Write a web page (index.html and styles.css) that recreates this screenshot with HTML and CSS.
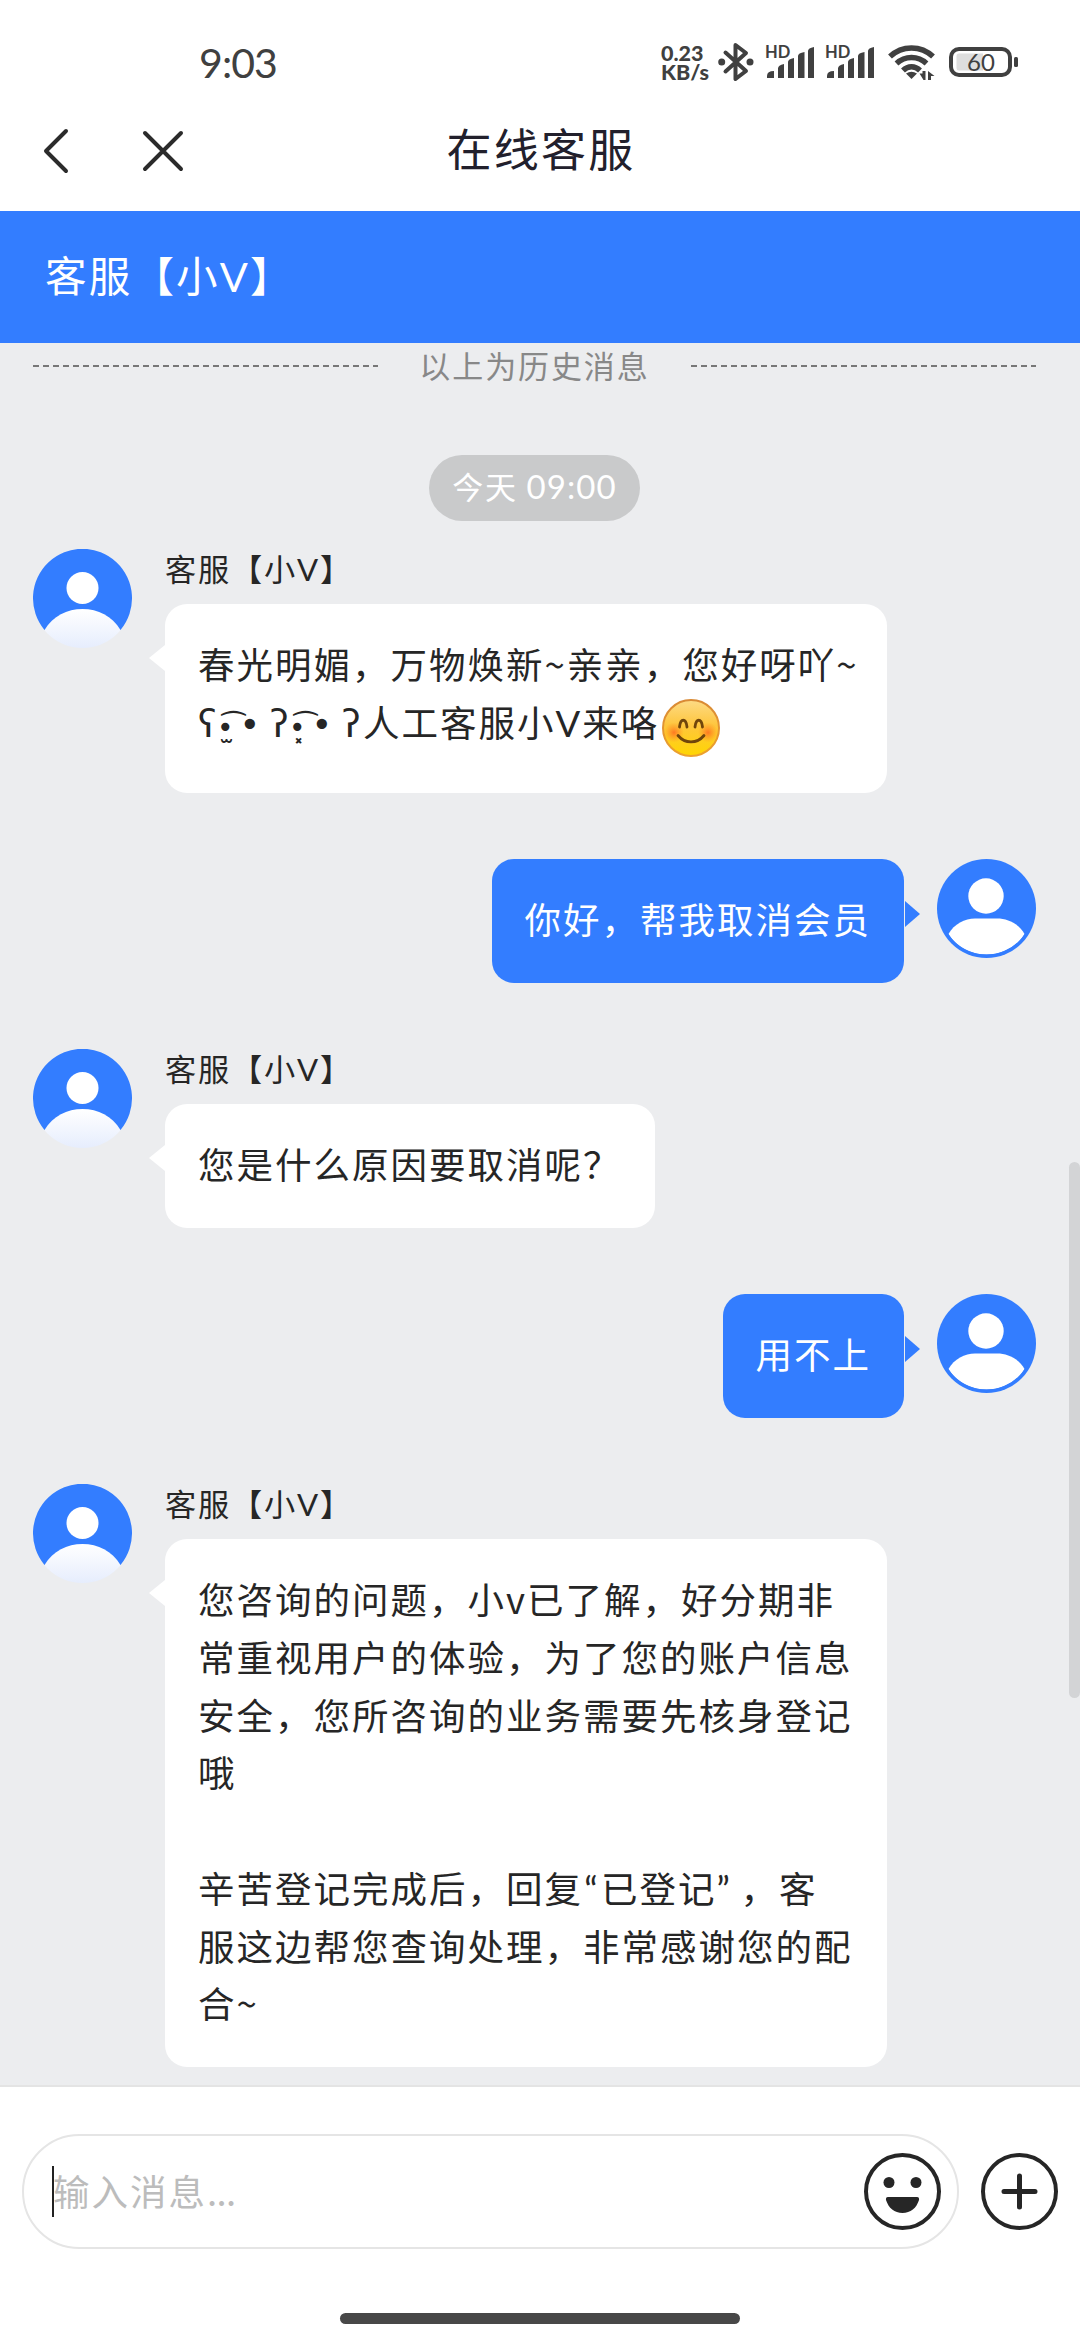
FILE: index.html
```html
<!DOCTYPE html>
<html lang="zh-CN">
<head>
<meta charset="utf-8">
<title>在线客服</title>
<link rel="stylesheet" href="styles.css">
</head>
<body>
<svg width="0" height="0" class="defs">
  <defs>
    <linearGradient id="agentBody" x1="0" y1="0" x2="0" y2="1">
      <stop offset="0" stop-color="#ffffff"/>
      <stop offset="1" stop-color="#e6edfd"/>
    </linearGradient>
    <clipPath id="round"><circle cx="49.5" cy="49.5" r="49.5"/></clipPath>
    <clipPath id="roundInner"><circle cx="49.5" cy="49.5" r="46"/></clipPath>
    <symbol id="agent" viewBox="0 0 99 99">
      <path d="M11.500 81A49.500 49.500 0 1 1 87.500 81z" fill="#337dff"/>
      <circle cx="49.5" cy="39" r="16" fill="#fff"/>
      <path clip-path="url(#round)" d="M11.500 81C20 67 34 60 49.500 60S79 67 87.500 81L92 99H7z" fill="url(#agentBody)"/>
    </symbol>
    <symbol id="user" viewBox="0 0 99 99">
      <circle cx="49.5" cy="49.5" r="49.5" fill="#337dff"/>
      <circle cx="49" cy="37" r="17.700" fill="#fff"/>
      <path clip-path="url(#roundInner)" d="M11.500 75C17 65 28 59.500 38 59.500H60C71 59.500 82 65 87.500 75C80 88 65 95.500 49.500 95.500S19 88 11.500 75z" fill="#fff"/>
    </symbol>
    <symbol id="signal" viewBox="0 0 52 36">
      <text x="0" y="14.500" class="hd">HD</text>
      <g fill="#404040"><path d="M2 35V33Q2 28 9 28V35zM13 35V25.500Q13 22 19 21V35zM23 35V19Q23 16 29 15V35zM33 35V13Q33 10 39.500 9V35zM43 35V8Q43 5 49 4V35z"/></g>
    </symbol>
  </defs>
</svg>

<header class="status">
  <span class="clock">9:03</span>
  <div class="status-icons">
    <div class="speed"><span>0.23</span><span>KB/s</span></div>
    <svg class="bt" viewBox="0 0 36 40"><path d="M7.500 10.500L28 29L17.500 37V3L28 11L7.500 29.500" fill="none" stroke="#404040" stroke-width="4" stroke-linejoin="round" stroke-linecap="round"/><circle cx="3.700" cy="20" r="3.500" fill="#404040"/><circle cx="32" cy="20" r="3.500" fill="#404040"/></svg>
    <svg class="sig"><use href="#signal"/></svg>
    <svg class="sig second"><use href="#signal"/></svg>
    <svg class="wifi" viewBox="0 0 48 36"><g fill="none" stroke="#404040" stroke-width="5.500"><path d="M2 12.500C14 1 33 1 45 12.500"/><path d="M8.500 19.500C17 11.500 30 11.500 38.500 19.500"/><path d="M15 26.500C20 21.500 27 21.500 32 26.500"/></g><path d="M18 29.500Q23.500 26 29 29.500L23.500 35z" fill="#404040"/><path d="M31.500 29.500H34.500V27H37.500V36H35.500zM40 36V27L46.500 32H43V36z" fill="#404040"/></svg>
    <svg class="battery" viewBox="0 0 70 30"><rect x="2" y="2" width="59" height="26" rx="8" fill="none" stroke="#404040" stroke-width="4"/><path d="M10 6.500H34V23.500H10Q7.500 23.500 7.500 21V9Q7.500 6.500 10 6.500" fill="#dedede"/><rect x="65" y="10" width="4" height="10" rx="1.500" fill="#404040"/><text x="32" y="23.500" text-anchor="middle" class="level">60</text></svg>
  </div>
</header>

<nav class="nav">
  <div class="nav-buttons">
    <svg class="back" viewBox="0 0 28 48"><path d="M24 4L4 24L24 44" fill="none" stroke="#2b2b2b" stroke-width="4" stroke-linecap="round" stroke-linejoin="round"/></svg>
    <svg class="close" viewBox="0 0 44 44"><path d="M4 4L40 40M40 4L4 40" fill="none" stroke="#2b2b2b" stroke-width="4" stroke-linecap="round"/></svg>
  </div>
  <h1 class="nav-title">在线客服</h1>
</nav>

<div class="agent-bar">客服【小<span class="latin">V</span>】</div>

<main class="chat">
  <div class="history"><svg class="dash"><line x1="0" y1="1" x2="345" y2="1"/></svg><span>以上为历史消息</span><svg class="dash"><line x1="0" y1="1" x2="345" y2="1"/></svg></div>
  <time class="time-pill">今天 <span class="digits">09:00</span></time>

  <section class="row">
    <svg class="avatar"><use href="#agent"/></svg>
    <div class="stack">
      <div class="name">客服【小<span class="latin">V</span>】</div>
      <div class="bubble wide with-emoji">春光明媚，万物焕新~亲亲，您好呀吖~<br><span class="kaomoji"><span>ʕ</span><span class="eyes"><span class="small-eye">•̫͡</span><span class="big-eye">•</span></span><span>ʔ</span><span class="eyes"><span class="small-eye">•͓͡</span><span class="big-eye">•</span></span><span>ʔ</span></span>人工客服小<span class="latin">V</span>来咯<svg class="emoji" viewBox="0 0 58 58">
        <defs>
          <linearGradient id="face" x1="0" y1="0" x2="0" y2="1"><stop offset="0" stop-color="#fddb86"/><stop offset=".45" stop-color="#fec63e"/><stop offset="1" stop-color="#ffd500"/></linearGradient>
          <linearGradient id="rim" x1="0" y1="0" x2="0" y2="1"><stop offset="0" stop-color="#d98a35"/><stop offset="1" stop-color="#eda12d"/></linearGradient>
          <radialGradient id="blush"><stop offset="0" stop-color="#ff6a20" stop-opacity=".85"/><stop offset="1" stop-color="#ff8a20" stop-opacity="0"/></radialGradient>
        </defs>
        <circle cx="29" cy="29" r="28" fill="url(#face)" stroke="url(#rim)" stroke-width="2"/>
        <circle cx="12" cy="33.500" r="10" fill="url(#blush)"/><circle cx="46" cy="33.500" r="10" fill="url(#blush)"/>
        <g fill="none" stroke="#70450b" stroke-linecap="round"><path d="M17.500 28C18.500 19 24 19 25 28M33 28C34 19 39.500 19 40.500 28" stroke-width="2.800"/><path d="M16 36.500C23 45 35 45 42 36.500" stroke-width="2.800"/></g>
      </svg></div>
    </div>
  </section>

  <section class="row own">
    <div class="bubble">你好，帮我取消会员</div>
    <svg class="avatar"><use href="#user"/></svg>
  </section>

  <section class="row">
    <svg class="avatar"><use href="#agent"/></svg>
    <div class="stack">
      <div class="name">客服【小<span class="latin">V</span>】</div>
      <div class="bubble">您是什么原因要取消呢？</div>
    </div>
  </section>

  <section class="row own">
    <div class="bubble">用不上</div>
    <svg class="avatar"><use href="#user"/></svg>
  </section>

  <section class="row">
    <svg class="avatar"><use href="#agent"/></svg>
    <div class="stack">
      <div class="name">客服【小<span class="latin">V</span>】</div>
      <div class="bubble wide">您咨询的问题，小v已了解，好分期非<br>常重视用户的体验，为了您的账户信息<br>安全，您所咨询的业务需要先核身登记<br>哦<br><br>辛苦登记完成后，回复<span class="quote">“</span>已登记<span class="quote closing">”</span>，客<br>服这边帮您查询处理，非常感谢您的配<br>合~</div>
    </div>
  </section>
  <div class="scrollbar"></div>
</main>

<footer class="composer">
  <div class="field">
    <span class="caret"></span><span class="placeholder">输入消息<span class="dots">...</span></span>
    <svg class="round-icon" viewBox="0 0 77 77"><circle cx="38.500" cy="38.500" r="36.500" fill="none" stroke="#262626" stroke-width="4"/><circle cx="25" cy="29.500" r="5.500" fill="#262626"/><circle cx="52" cy="29.500" r="5.500" fill="#262626"/><path d="M24 44H53Q55.500 44 55 47C52.500 55 46.500 60 38.500 60S24.500 55 22 47Q21.500 44 24 44z" fill="#262626"/></svg>
  </div>
  <svg class="round-icon" viewBox="0 0 77 77"><circle cx="38.500" cy="38.500" r="36.500" fill="none" stroke="#262626" stroke-width="4"/><path d="M38.500 23V54M23 38.500H54" stroke="#262626" stroke-width="5" stroke-linecap="round"/></svg>
</footer>
<div class="home"><div class="home-bar"></div></div>
</body>
</html>
```
FILE: styles.css
```css
* { box-sizing: border-box; }
body {
  margin: 0;
  width: 1080px;
  height: 2340px;
  overflow: hidden;
  display: flex;
  flex-direction: column;
  background: #fff;
  color: #262626;
  font-family: "Noto Sans CJK SC", sans-serif;
}
body > * { flex: none; }
svg { display: block; flex: none; }
.defs { position: absolute; }
.latin { font-family: Lato, sans-serif; line-height: 1; }

/* status bar */
.status {
  height: 100px;
  padding: 42px 61px 0 199px;
  display: flex;
  justify-content: space-between;
  color: #404040;
}
.clock { font: 400 41px/42px Lato, sans-serif; letter-spacing: -0.9px; }
.status-icons { display: flex; align-items: flex-start; height: 40px; }
.speed {
  display: flex;
  flex-direction: column;
  width: 57px;
  font: 900 21.5px/18.5px Lato, sans-serif;
  padding-top: 2px;
}
.bt { width: 36px; height: 40px; }
.sig { width: 52px; height: 36px; margin: 1px 0 0 11px; }
.sig.second { margin-left: 8px; }
.hd { font: 700 16.5px Lato, sans-serif; fill: #404040; }
.wifi { width: 48px; height: 36px; margin: 2px 0 0 11px; }
.battery { width: 70px; height: 30px; margin: 5px 0 0 13px; }
.level { font: 400 24px Lato, sans-serif; fill: #404040; }

/* navigation */
.nav {
  height: 111px;
  display: grid;
  grid-template-columns: 1fr auto 1fr;
  align-items: center;
  padding-bottom: 10px;
}
.nav-buttons { display: flex; align-items: center; padding-left: 42px; gap: 71px; }
.back { width: 28px; height: 48px; }
.close { width: 44px; height: 44px; }
.nav-title {
  margin: 0;
  padding: 0 0 5px 2px;
  font-size: 45px;
  font-weight: 400;
  line-height: 60px;
  letter-spacing: 2.2px;
  color: #22202c;
}

.agent-bar {
  height: 132px;
  padding: 0 45px;
  background: #337dff;
  color: #fff;
  font-size: 41.5px;
  letter-spacing: 2.2px;
  line-height: 127px;
}

/* conversation */
.chat {
  position: relative;
  height: 1744px;
  background: #ecedef;
  border-bottom: 2px solid #e4e4e4;
  display: flex;
  flex-direction: column;
}
.chat > * { flex: none; }
.history {
  display: flex;
  justify-content: space-between;
  align-items: center;
  height: 46px;
  padding: 0 44px 0 33px;
  color: #888;
  font-size: 31px;
  letter-spacing: 1.9px;
}
.history span { margin-top: -3px; }
.dash { width: 345px; height: 2px; }
.dash line { stroke: #777; stroke-width: 2; stroke-dasharray: 6 4; }
.time-pill {
  align-self: center;
  margin: 66px 11px 28px 0;
  width: 211px;
  height: 66px;
  border-radius: 33px;
  background: #c9cacb;
  color: #fff;
  font-size: 31px;
  line-height: 62px;
  letter-spacing: 1.8px;
  text-align: center;
  white-space: nowrap;
}
.digits { font: 400 33px/1 Lato, sans-serif; letter-spacing: 1.1px; }
.row { display: flex; padding: 0 44px 0 33px; margin-bottom: 66px; }
.row.own { justify-content: flex-end; gap: 33px; }
.avatar { width: 99px; height: 99px; }
.stack { margin-left: 33px; display: flex; flex-direction: column; align-items: flex-start; }
.name { height: 55px; line-height: 38px; font-size: 31.2px; letter-spacing: 1.8px; }
.bubble {
  position: relative;
  padding: 31px 33px 35.25px;
  border-radius: 22px;
  background: #fff;
  font-size: 36.5px;
  letter-spacing: 2px;
  line-height: 57.75px;
  white-space: nowrap;
}
.bubble::before {
  content: "";
  position: absolute;
  left: -16px;
  top: 41px;
  border: 13px solid transparent;
  border-left: 0;
  border-right: 16px solid #fff;
}
.bubble.wide { width: 722px; }
.with-emoji { height: 189px; }
.own .bubble { background: #337dff; color: #fff; }
.own .bubble::before {
  left: auto;
  right: -16px;
  top: 42px;
  border-right: 0;
  border-left: 15px solid #337dff;
}
.kaomoji {
  display: inline-grid;
  grid-template-columns: 21px 51px 21px 51px 21px;
  align-items: baseline;
  height: 40px;
  line-height: 40px;
  letter-spacing: 0;
  font-family: "DejaVu Sans", sans-serif;
}
.eyes { display: flex; align-items: baseline; gap: 6px; margin-left: -2px; }
.small-eye { font-size: 28px; }
.big-eye { font-size: 35px; }
.emoji { display: inline-block; margin: -10px 0 -20px 3px; vertical-align: 0; width: 58px; height: 58px; }
.quote { display: inline-block; width: 18px; font-family: Lato, sans-serif; line-height: 1; text-align: center; }
.closing { margin-right: 6px; text-align: left; }
.scrollbar {
  position: absolute;
  right: 0;
  top: 819px;
  width: 11px;
  height: 536px;
  border-radius: 6px;
  background: #d3d4d6;
}

/* composer */
.composer {
  display: flex;
  align-items: center;
  gap: 22px;
  padding: 47px 22px 0;
}
.field {
  flex: 1;
  height: 115px;
  border: 2px solid #e5e5e5;
  border-radius: 58px;
  display: flex;
  align-items: center;
  padding: 0 16px 0 28px;
}
.caret { width: 2px; height: 51px; background: #222; }
.placeholder { flex: 1; color: #bcbcbc; font-size: 36.5px; letter-spacing: 2px; margin: -3px 0 0 -1px; }
.dots { letter-spacing: -0.6px; }
.round-icon { width: 77px; height: 77px; }
.home { display: flex; justify-content: center; padding-top: 64px; }
.home-bar { width: 400px; height: 11px; border-radius: 6px; background: #484848; }
```
